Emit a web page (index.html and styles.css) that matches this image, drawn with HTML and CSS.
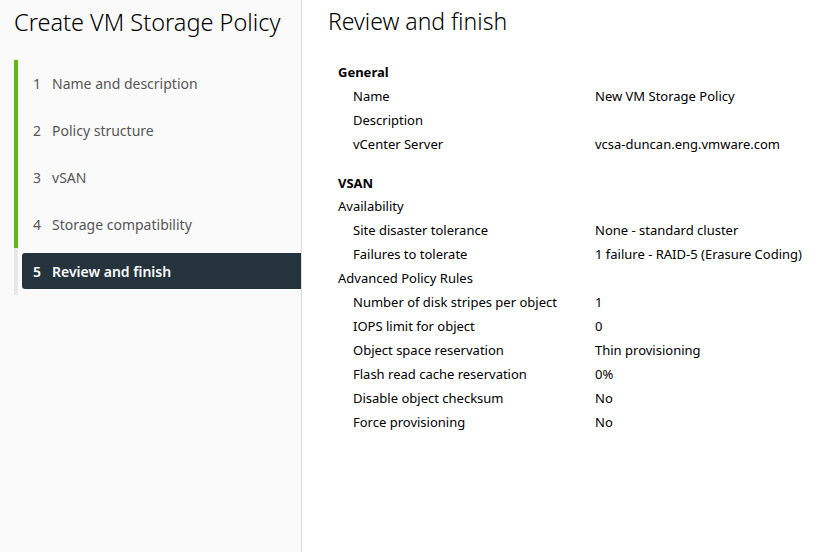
FILE: index.html
```html
<!DOCTYPE html>
<html lang="en">
<head>
  <meta charset="UTF-8" />
  <title>Create VM Storage Policy</title>
  <link rel="stylesheet" href="styles.css">
</head>
<body>
  <div class="wizard">
    <aside class="sidebar">
      <h2 class="wizard-title">Create VM Storage Policy</h2>
      <ol class="steps">
        <li class="step done"><span class="num">1</span>Name and description</li>
        <li class="step done"><span class="num">2</span>Policy structure</li>
        <li class="step done"><span class="num">3</span>vSAN</li>
        <li class="step done"><span class="num">4</span>Storage compatibility</li>
        <li class="step active"><span class="num">5</span>Review and finish</li>
      </ol>
    </aside>

    <main class="content">
      <h3 class="page-title">Review and finish</h3>

      <div class="review">
        <div class="section">
          <div class="row head">General</div>
          <div class="row sub"><span class="label">Name</span><span class="value">New VM Storage Policy</span></div>
          <div class="row sub"><span class="label">Description</span><span class="value"></span></div>
          <div class="row sub"><span class="label">vCenter Server</span><span class="value">vcsa-duncan.eng.vmware.com</span></div>
        </div>

        <div class="section">
          <div class="row head">VSAN</div>
          <div class="row">Availability</div>
          <div class="row sub"><span class="label">Site disaster tolerance</span><span class="value">None - standard cluster</span></div>
          <div class="row sub"><span class="label">Failures to tolerate</span><span class="value">1 failure - RAID-5 (Erasure Coding)</span></div>
          <div class="row">Advanced Policy Rules</div>
          <div class="row sub"><span class="label">Number of disk stripes per object</span><span class="value">1</span></div>
          <div class="row sub"><span class="label">IOPS limit for object</span><span class="value">0</span></div>
          <div class="row sub"><span class="label">Object space reservation</span><span class="value">Thin provisioning</span></div>
          <div class="row sub"><span class="label">Flash read cache reservation</span><span class="value">0%</span></div>
          <div class="row sub"><span class="label">Disable object checksum</span><span class="value">No</span></div>
          <div class="row sub"><span class="label">Force provisioning</span><span class="value">No</span></div>
        </div>
      </div>
    </main>
  </div>
</body>
</html>
```

FILE: styles.css
```css
body {
  margin: 0;
  font-family: 'Noto Sans', sans-serif;
  color: #313131;
  background: #fff;
}

.wizard {
  display: flex;
  height: 552px;
}

/* Left step list */
.sidebar {
  width: 301px;
  flex-shrink: 0;
  background: #fafafa;
  border-right: 1px solid #dcdcdc;
}
.wizard-title {
  margin: 0;
  padding: 5px 0 0 14px;
  font-size: 23.5px;
  font-weight: 300;
  color: #000;
  line-height: 34px;
}
.steps {
  list-style: none;
  margin: 21px 0 0 14px;
  padding: 0 0 6px 0;
  border-left: 4px solid #e8e8e8;
}
.step {
  display: flex;
  align-items: center;
  height: 47px;
  padding-left: 15px;
  font-size: 14px;
  color: #565656;
  margin-left: -4px;
  border-left: 4px solid transparent;
}
.step.done {
  border-left-color: #60b515;
}
.step .num {
  margin-right: 11px;
}
.step.active {
  height: 36px;
  margin: 5px 0 0 4px;
  padding-left: 11px;
  border-left: none;
  border-radius: 3px 0 0 3px;
  background: #25333d;
  color: #fff;
  font-weight: 600;
}

/* Right review panel */
.content {
  flex: 1;
  padding: 0 0 0 26px;
}
.page-title {
  margin: 0;
  padding-top: 4px;
  font-size: 23px;
  font-weight: 300;
  color: #000;
  line-height: 34px;
}
.review {
  padding: 22px 0 0 10px;
  font-size: 13px;
  color: #000;
}
.section + .section {
  margin-top: 15px;
}
.row {
  display: flex;
  height: 24px;
  align-items: center;
}
.row.head {
  font-weight: 700;
}
.section + .section .row.head {
  height: 23px;
}
.row.sub .label {
  width: 242px;
  padding-left: 15px;
}
```
